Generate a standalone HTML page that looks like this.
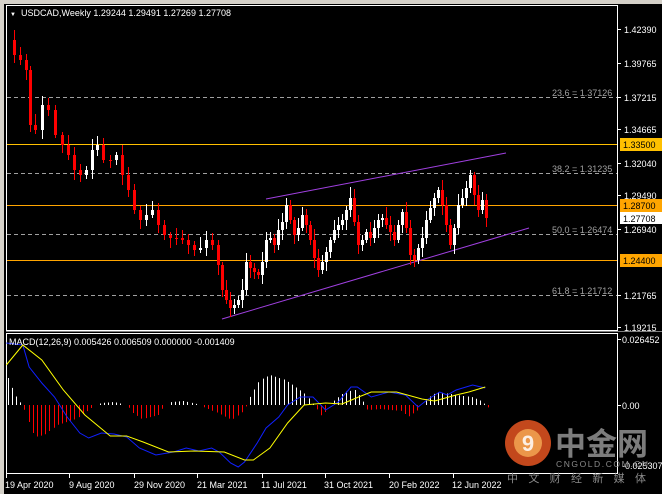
<!DOCTYPE html>
<html><head><meta charset="utf-8"><style>
html,body{margin:0;padding:0;background:#fff;}
body{width:662px;height:494px;overflow:hidden;position:relative;font-family:"Liberation Sans",sans-serif;}
svg{position:absolute;left:0;top:0;}
</style></head><body>
<svg id="s" width="662" height="494" xmlns="http://www.w3.org/2000/svg" font-family="Liberation Sans, sans-serif" font-size="9">
<rect width="662" height="494" fill="#d4d0c8"/>
<rect x="4" y="4" width="658" height="490" fill="#000"/>
<rect x="6.5" y="5.5" width="611" height="325" fill="none" stroke="#fff" stroke-width="1"/>
<rect x="6.5" y="333.5" width="611" height="140" fill="none" stroke="#fff" stroke-width="1"/>
<line x1="6" y1="331.5" x2="662" y2="331.5" stroke="#808080"/>
<g stroke="#a0a0a0" stroke-dasharray="4,3" stroke-width="1">
<line x1="7" y1="97.5" x2="617" y2="97.5"/>
<line x1="7" y1="173.5" x2="617" y2="173.5"/>
<line x1="7" y1="234.5" x2="617" y2="234.5"/>
<line x1="7" y1="295.5" x2="617" y2="295.5"/>
</g>
<g fill="#a0a0a0" font-size="9">
<text x="552" y="96">23.6 = 1.37126</text>
<text x="552" y="172">38.2 = 1.31235</text>
<text x="552" y="233">50.0 = 1.26474</text>
<text x="552" y="294">61.8 = 1.21712</text>
</g>
<line x1="7" y1="144.5" x2="617" y2="144.5" stroke="#ffc000"/>
<line x1="7" y1="205.5" x2="617" y2="205.5" stroke="#ffa500"/>
<line x1="7" y1="260.5" x2="617" y2="260.5" stroke="#ffa500"/>
<g stroke="#a040e0" stroke-width="1">
<line x1="266" y1="199" x2="506" y2="153"/>
<line x1="222" y1="319" x2="529" y2="228"/>
</g>
<g id="candles"></g>
<g fill="#fff" font-size="9">
<line x1="617" y1="29.5" x2="621" y2="29.5" stroke="#fff"/><text x="624" y="33">1.42390</text>
<line x1="617" y1="63.5" x2="621" y2="63.5" stroke="#fff"/><text x="624" y="67">1.39765</text>
<line x1="617" y1="97.5" x2="621" y2="97.5" stroke="#fff"/><text x="624" y="101">1.37215</text>
<line x1="617" y1="129.5" x2="621" y2="129.5" stroke="#fff"/><text x="624" y="133">1.34665</text>
<line x1="617" y1="163.5" x2="621" y2="163.5" stroke="#fff"/><text x="624" y="167">1.32040</text>
<line x1="617" y1="195.5" x2="621" y2="195.5" stroke="#fff"/><text x="624" y="199">1.29490</text>
<line x1="617" y1="229.5" x2="621" y2="229.5" stroke="#fff"/><text x="624" y="233">1.26940</text>
<line x1="617" y1="295.5" x2="621" y2="295.5" stroke="#fff"/><text x="624" y="299">1.21765</text>
<line x1="617" y1="327.5" x2="621" y2="327.5" stroke="#fff"/><text x="624" y="331">1.19215</text>
</g>
<rect x="620" y="138" width="42" height="13" fill="#ffc000"/><text x="623" y="148" fill="#000" font-size="9">1.33500</text>
<rect x="620" y="199" width="42" height="13" fill="#ffa500"/><text x="623" y="209" fill="#000" font-size="9">1.28700</text>
<rect x="620" y="212" width="42" height="12" fill="#fff"/><text x="623" y="222" fill="#000" font-size="9">1.27708</text>
<rect x="620" y="254" width="42" height="13" fill="#ffa500"/><text x="623" y="264" fill="#000" font-size="9">1.24400</text>
<text x="10" y="16" fill="#fff" font-size="6">▼</text>
<text x="21" y="16" fill="#fff" font-size="9">USDCAD,Weekly  1.29244 1.29491 1.27269 1.27708</text>
<g id="hist"></g>
<g transform="scale(1.267,1)">
<polyline fill="none" stroke="#1020ff" stroke-width="1" vector-effect="non-scaling-stroke" points="5,343 18,345 23,367 33,383 43,397 53,417 63,433 70,438 80,433 90,434 100,437 110,448 123,455 137,452 147,448 157,451 167,448 173,452 182,463 188,467 193,462 203,443 210,428 220,417 227,405 237,397 247,397 257,410 267,402 277,387 282,387 293,397 307,392 320,395 330,407 337,400 347,392 353,395 360,390 373,385 383,388"/>
<polyline fill="none" stroke="#ffff00" stroke-width="1" vector-effect="non-scaling-stroke" points="5,365 18,345 33,360 50,390 67,415 87,436 100,436 113,442 133,452 153,451 177,452 193,460 200,460 213,448 227,423 240,405 257,403 270,404 283,397 293,392 313,392 333,399 343,401 360,395 370,392 383,387"/>
</g>
<text x="9" y="345" fill="#fff" font-size="9">MACD(12,26,9) 0.005426 0.006509 0.000000 -0.001409</text>
<g fill="#fff" font-size="9">
<line x1="617" y1="339.5" x2="621" y2="339.5" stroke="#fff"/><text x="622" y="343">0.026452</text>
<line x1="617" y1="405.5" x2="621" y2="405.5" stroke="#fff"/><text x="622" y="409">0.00</text>
<text x="622" y="469">-0.025307</text>
</g>
<g stroke="#fff"><line x1="6.5" y1="474" x2="6.5" y2="478"/><line x1="69.5" y1="474" x2="69.5" y2="478"/><line x1="134.5" y1="474" x2="134.5" y2="478"/><line x1="197.5" y1="474" x2="197.5" y2="478"/><line x1="262.5" y1="474" x2="262.5" y2="478"/><line x1="325.5" y1="474" x2="325.5" y2="478"/><line x1="389.5" y1="474" x2="389.5" y2="478"/><line x1="453.5" y1="474" x2="453.5" y2="478"/></g>
<g fill="#fff" font-size="9">
<text x="5" y="488">19 Apr 2020</text><text x="69" y="488">9 Aug 2020</text><text x="134" y="488">29 Nov 2020</text><text x="197" y="488">21 Mar 2021</text><text x="261" y="488">11 Jul 2021</text><text x="324" y="488">31 Oct 2021</text><text x="389" y="488">20 Feb 2022</text><text x="452" y="488">12 Jun 2022</text>
</g>
<!-- logo -->
<circle cx="528" cy="443" r="23" fill="#d8501f" opacity="0.9"/>
<circle cx="528" cy="443" r="14" fill="#f0a050" opacity="0.9"/>
<text x="528" y="451" text-anchor="middle" fill="#fff" font-size="22" font-weight="bold" opacity="0.85">9</text>
<text x="555" y="455" fill="#8a8a8a" font-size="31" font-weight="bold" font-family="Liberation Sans, Noto Sans CJK SC, sans-serif" opacity="0.9">中金网</text>
<text x="556" y="467" fill="#8a8a8a" font-size="8.5" textLength="92">CNGOLD.COM.CN</text>
<text x="507" y="482" fill="#8a8a8a" font-size="11" textLength="139" font-family="Liberation Sans, Noto Sans CJK SC, sans-serif">中文财经新媒体</text>
</svg>
<script>
(function(){
var NS="http://www.w3.org/2000/svg";
function el(p,t,a){var e=document.createElementNS(NS,t);for(var k in a)e.setAttribute(k,a[k]);p.appendChild(e);}
var pts=[[8,40],[14,55],[20,60],[26,70],[30,125],[35,130],[42,105],[48,110],[55,135],[62,145],[68,155],[74,170],[80,175],[86,170],[92,150],[97,145],[103,160],[110,160],[116,155],[122,175],[128,190],[134,210],[140,220],[146,215],[152,210],[158,225],[164,235],[170,238],[176,238],[182,240],[188,245],[194,250],[200,248],[206,240],[212,245],[218,265],[222,290],[226,300],[230,308],[234,305],[238,300],[242,290],[246,262],[250,268],[254,272],[258,275],[262,262],[266,240],[270,238],[274,245],[278,230],[282,222],[286,205],[290,220],[294,235],[298,228],[302,215],[306,225],[310,240],[314,258],[318,270],[322,262],[326,252],[330,240],[334,230],[338,225],[342,220],[346,210],[350,198],[354,222],[358,245],[362,240],[366,232],[370,238],[374,228],[378,220],[382,218],[386,225],[390,232],[394,240],[398,225],[402,212],[406,228],[410,255],[414,260],[418,248],[422,238],[426,220],[430,208],[434,198],[438,190],[442,205],[446,225],[450,245],[454,228],[458,205],[462,198],[466,188],[470,175],[474,195],[478,210],[482,200],[486,218]];
var g=document.getElementById('candles');
for(var i=1;i<pts.length;i++){
var x=pts[i][0],o=pts[i-1][1],c=pts[i][1];
var top=Math.min(o,c),bot=Math.max(o,c);
var hi=top-3-(i*7%9),lo=bot+3+(i*5%8);
var col=c<o?'#fff':'#f00';
el(g,'line',{x1:x+0.5,y1:hi,x2:x+0.5,y2:lo,stroke:col,'stroke-width':1});
el(g,'rect',{x:x-1,y:top,width:3,height:Math.max(1,bot-top),fill:col});
}
var h=[[5,-30],[10,-15],[14,-5],[18,0],[21,12],[27,32],[35,30],[45,20],[60,14],[70,5],[75,0],[80,-2],[90,-3],[100,0],[105,8],[112,14],[125,10],[130,0],[135,-3],[145,-4],[155,-1],[172,8],[183,15],[193,5],[196,-5],[205,-25],[213,-30],[225,-25],[240,-12],[246,-3],[250,4],[255,13],[258,3],[262,-3],[272,-13],[280,-15],[285,-7],[290,5],[300,4],[317,6],[322,12],[330,5],[335,-5],[345,-13],[360,-10],[372,-8],[380,-4],[386,3]];
var hg=document.getElementById('hist');
function val(x){for(var j=1;j<h.length;j++){if(x<=h[j][0]){var a=h[j-1],b=h[j];return a[1]+(b[1]-a[1])*(x-a[0])/(b[0]-a[0]);}}return 0;}
for(var x=6;x<=386;x+=3.3){var v=val(x);if(Math.abs(v)<1)continue;
var xx=Math.round(x*1.267)+0.5;el(hg,'line',{x1:xx,y1:405,x2:xx,y2:405+v,stroke:v<0?'#fff':'#f00','stroke-width':1});}
})();
</script>
</body></html>
